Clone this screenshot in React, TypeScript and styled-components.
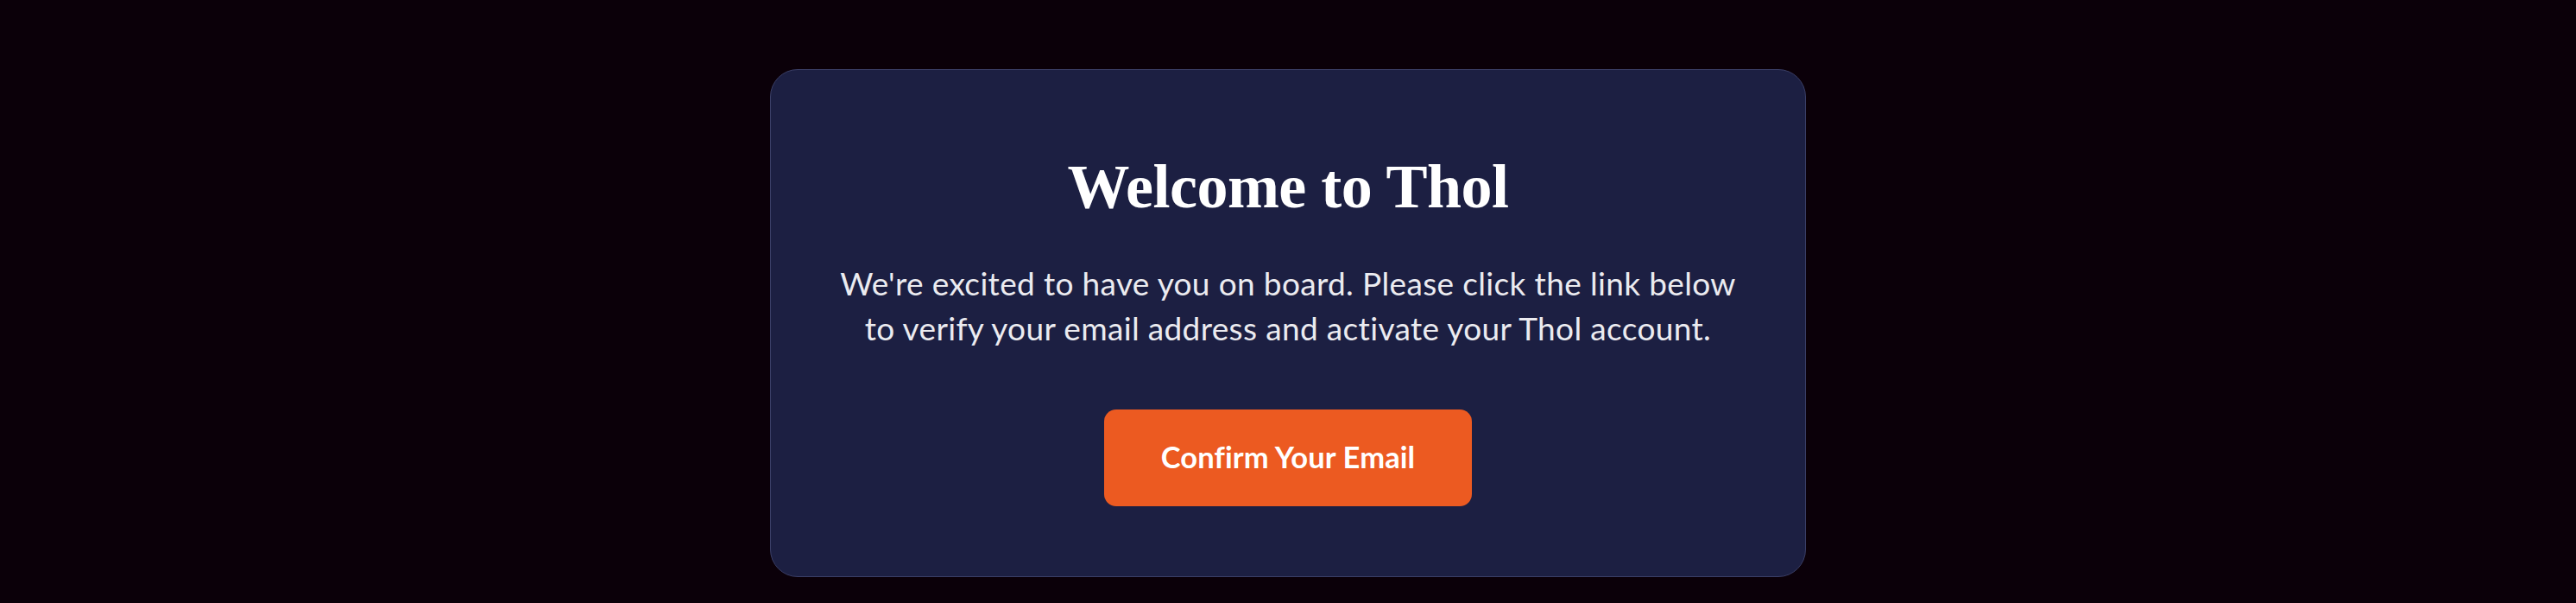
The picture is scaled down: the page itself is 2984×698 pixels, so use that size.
import React from "react";
import styled, { createGlobalStyle } from "styled-components";

const GlobalStyle = createGlobalStyle`
  html, body {
    margin: 0;
    padding: 0;
    background: #0b0009;
  }
  body {
    font-family: Lato, "Liberation Sans", sans-serif;
  }
`;

const Page = styled.div`
  min-height: 698px;
  box-sizing: border-box;
  padding-top: 80px;
  display: flex;
  justify-content: center;
  align-items: flex-start;
  background: #0b0009;
`;

const Card = styled.div`
  box-sizing: border-box;
  width: 1200px;
  height: 588px;
  padding: 92px 80px 80px;
  background: #1c1f42;
  border: 1.5px solid #3a3e66;
  border-radius: 32px;
  display: flex;
  flex-direction: column;
  align-items: center;
  text-align: center;
`;

const Title = styled.h1`
  margin: 0 0 43px;
  font-family: "Liberation Serif", "Times New Roman", serif;
  font-weight: 700;
  font-size: 72px;
  line-height: 1.2;
  letter-spacing: -0.5px;
  color: #ffffff;
`;

const Message = styled.p`
  margin: 0 0 69px;
  max-width: 1040px;
  font-family: Lato, "Liberation Sans", sans-serif;
  font-size: 37px;
  letter-spacing: 0.35px;
  line-height: 51.5px;
  color: #ebebf0;
`;

const ConfirmButton = styled.a`
  box-sizing: border-box;
  height: 112px;
  padding: 0 66px 3px;
  display: inline-flex;
  align-items: center;
  justify-content: center;
  background: #ec5a21;
  border-radius: 14px;
  font-family: Lato, "Liberation Sans", sans-serif;
  font-weight: 700;
  font-size: 34.5px;
  letter-spacing: 0.1px;
  color: #ffffff;
  text-decoration: none;
  cursor: pointer;
`;

export default function App() {
  return (
    <>
      <GlobalStyle />
      <Page>
        <Card>
          <Title>Welcome to Thol</Title>
          <Message>
            We're excited to have you on board. Please click the link below to
            verify your email address and activate your Thol account.
          </Message>
          <ConfirmButton href="#">Confirm Your Email</ConfirmButton>
        </Card>
      </Page>
    </>
  );
}
